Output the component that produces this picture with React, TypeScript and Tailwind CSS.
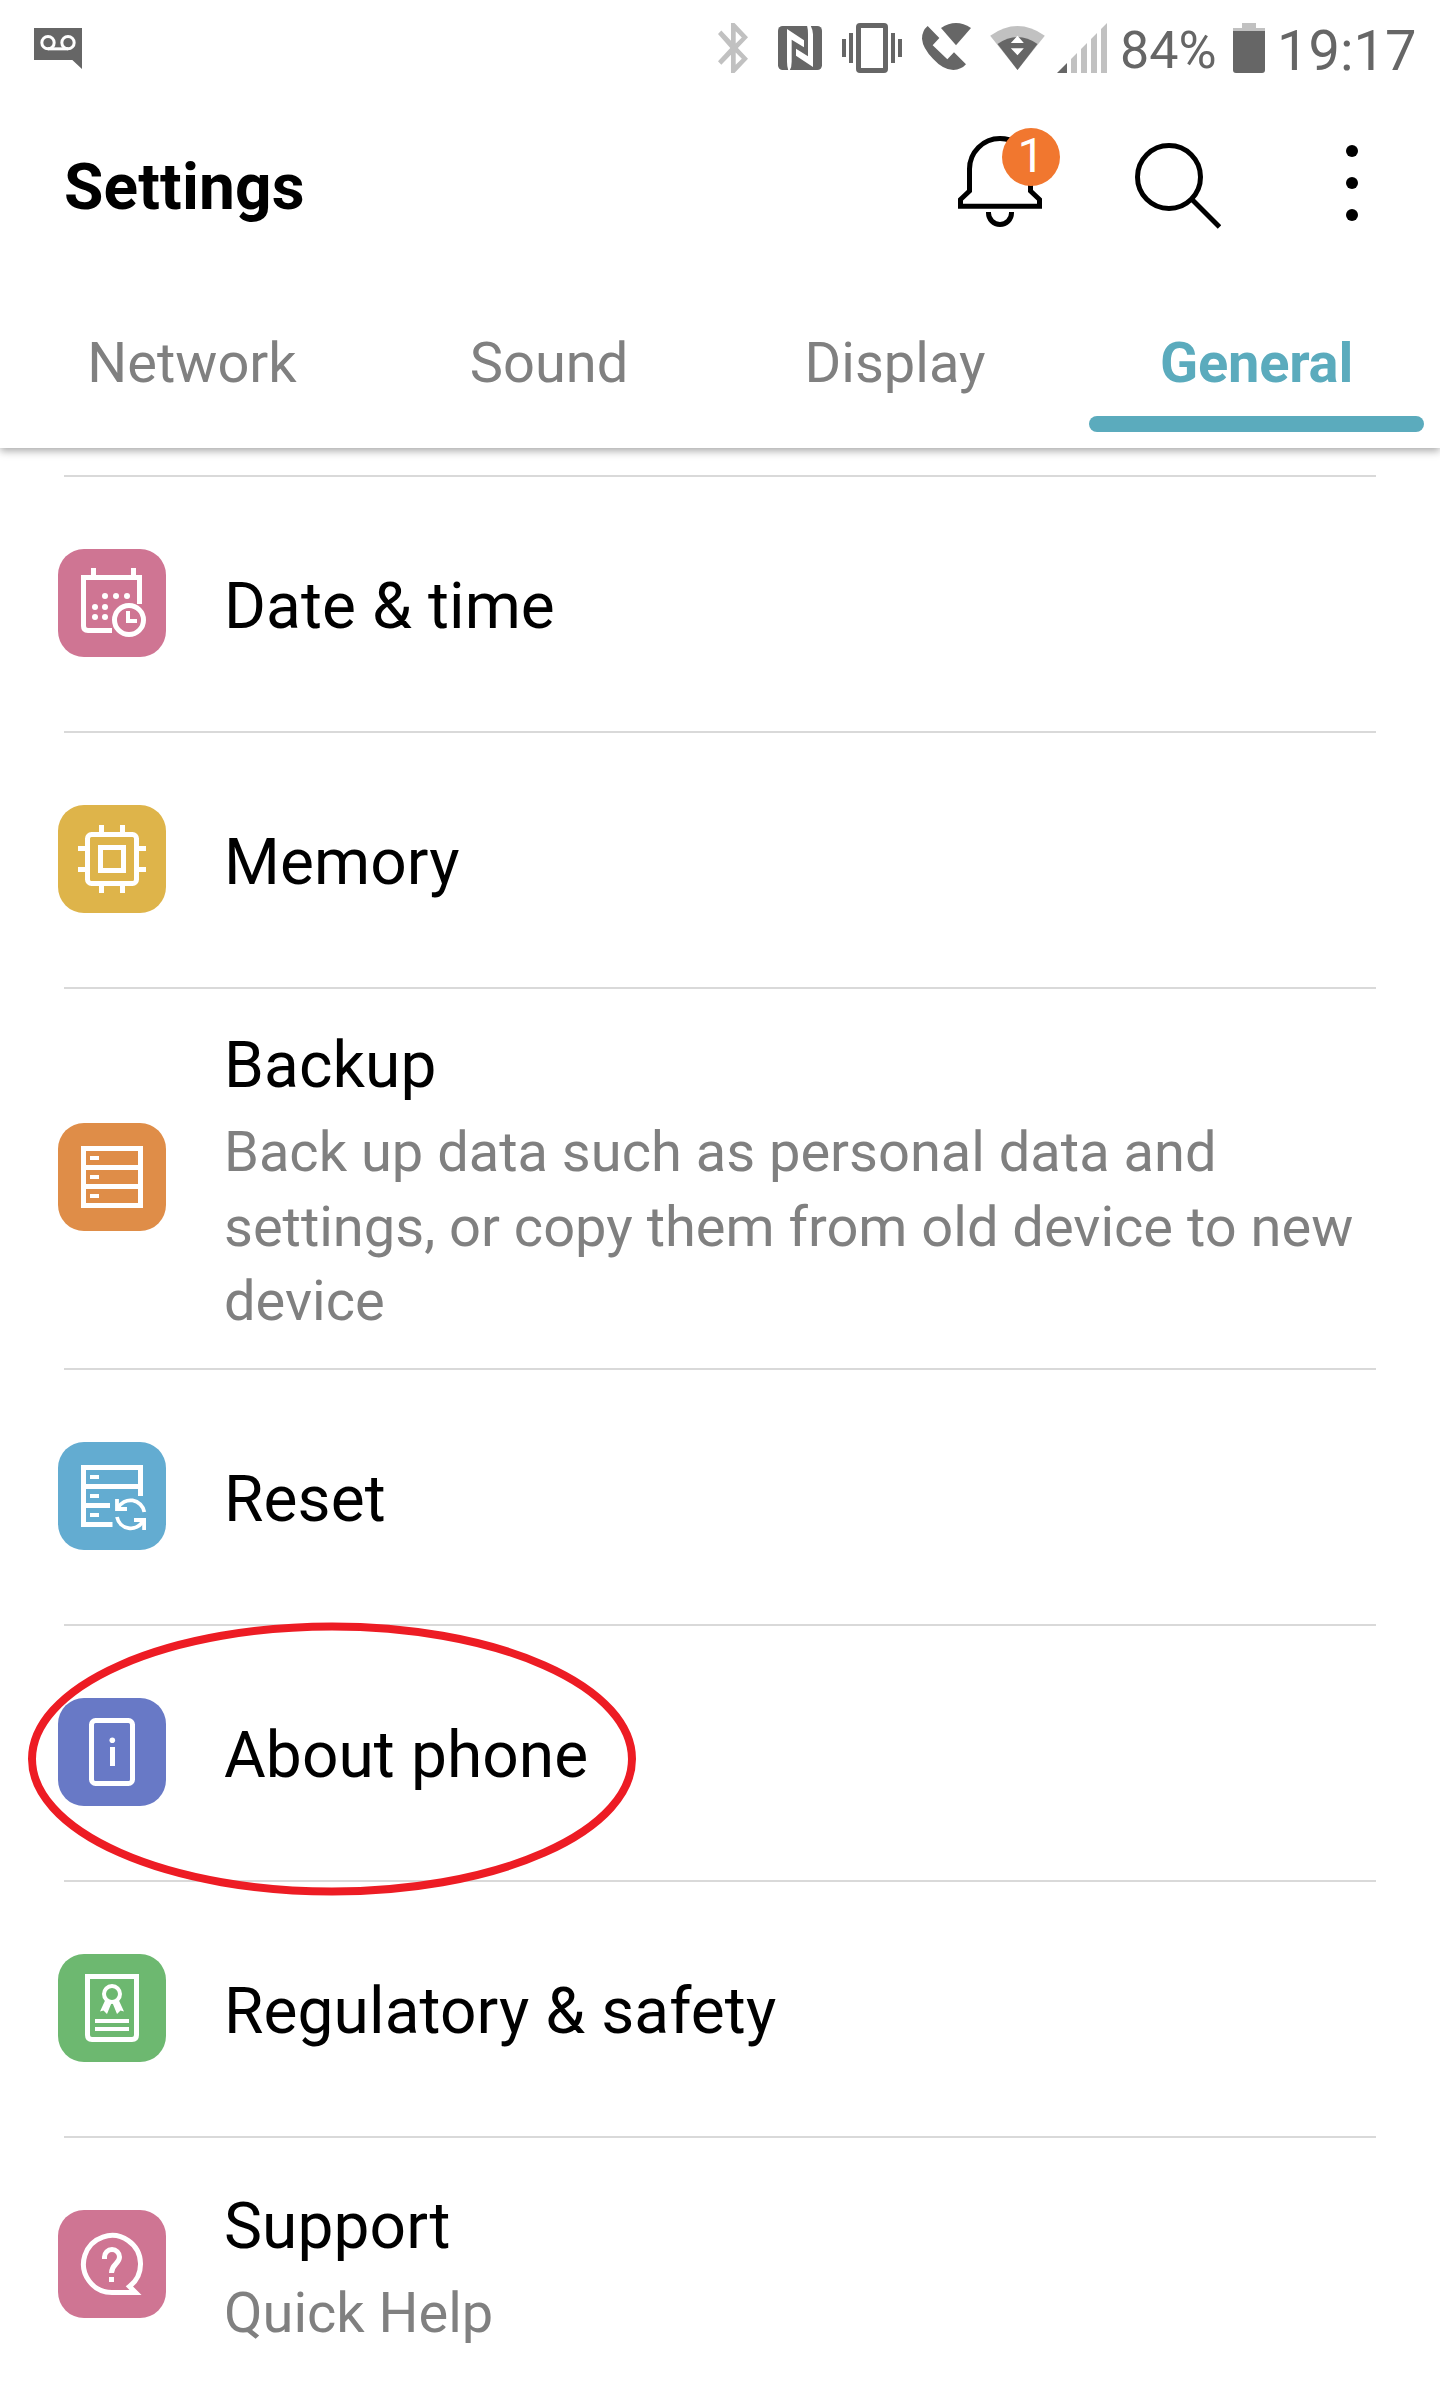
import type { ReactNode } from 'react';

/* ---------- status bar icons ---------- */

const VoicemailIcon = () => (
  <svg className="h-[41px] w-12" viewBox="102 81 144 123">
    <path d="M102 81H246V204L217 177H102Z" fill="#666666" />
    <g fill="none" stroke="#fff" strokeWidth="9">
      <circle cx="144" cy="125" r="18.500" />
      <circle cx="204" cy="125" r="18.500" />
      <path d="M144 143.500H204" />
    </g>
  </svg>
);

const BluetoothIcon = () => (
  <svg className="h-[50px] w-[30px]" viewBox="5 2 12.71 20" preserveAspectRatio="none">
    <path
      fill="#c1c1c1"
      d="M17.71 7.71L12 2h-1.500v7.1L6.41 5 5 6.41 10.2 12 5 17.29 6.41 18.700 10.500 14.700V22h1.500l5.71-5.71-4.3-4.29 4.3-4.29zM12.500 5.300l2.6 2.500L12.500 10.200V5.300zm2.6 11L12.500 18.700v-4.900l2.6 2.500z"
    />
  </svg>
);

const NfcIcon = () => (
  <svg className="h-11 w-11" viewBox="234 78 132 132">
    <rect x="234" y="78" width="132" height="132" rx="14" fill="#666666" />
    <path d="M261 87L312 121V142L275 119V185Q275 202 269 211H265Q261 200 261 185Z" fill="#fff" />
    <path d="M339 201L288 167V146L324 169V103Q324 86 321 77H332Q338 88 339 103Z" fill="#fff" />
  </svg>
);

const VibrateIcon = () => (
  <svg className="h-[50px] w-[60px]" viewBox="842 23 60 50" fill="#666666">
    <rect x="858.500" y="25.500" width="27" height="45" rx="1.500" fill="none" stroke="#666666" strokeWidth="5" />
    <path d="M842 39h4v18h-4zM849 33h4v30h-4zM891 33h4v30h-4zM898 39h4v18h-4z" />
  </svg>
);

const WifiCallIcon = () => (
  <svg className="h-[50px] w-[49px]" viewBox="666 69 147 150" fill="#666666">
    <path d="M683 78Q666 92 666 116Q668 144 699 176Q729 209 760 210Q784 209 798 193L762 157L742 178L698 136L718 114Z" />
    <path d="M768 136L723 84Q768 54 813 84Z" />
  </svg>
);

const WifiIcon = () => (
  <svg className="h-11 w-[55px]" viewBox="872 78 164 132">
    <path d="M954 210L872 107Q954 49 1036 107Z" fill="#c1c1c1" />
    <path d="M954 210L894 132Q954 90 1014 132Z" fill="#666666" />
    <path d="M934 129L954 107L973 129ZM934 145H973L954 166Z" fill="#fff" />
  </svg>
);

const SignalIcon = () => (
  <svg className="h-[50px] w-[50px]" viewBox="1057 23 50 50">
    <path d="M1057 73L1067 63V73Z" fill="#666666" />
    <path
      fill="#c1c1c1"
      d="M1071 73V59L1077 53V73ZM1081 73V49L1087 43V73ZM1091 73V39L1097 33V73ZM1101 73V29L1107 23V73Z"
    />
  </svg>
);

const BatteryIcon = () => (
  <svg className="h-[50px] w-8" viewBox="0 0 32 50">
    <path d="M9 0h14v5h9v3H0V5h9z" fill="#c1c1c1" />
    <path d="M0 8h32v39q0 3-3 3H3q-3 0-3-3z" fill="#666666" />
  </svg>
);

/* ---------- header icons ---------- */

const BellIcon = () => (
  <svg className="h-[91px] w-[84px]" viewBox="958 136 84 91" fill="none" stroke="#000" strokeWidth="5">
    <path d="M969.500 169a30.500 30.500 0 0 1 61 0V191L1039.500 199.500V206.300H960.500V199.500L969.500 191Z" />
    <path d="M988.500 212v1a11.500 11.500 0 0 0 23 0v-1" />
  </svg>
);

const SearchIcon = () => (
  <svg className="h-[86px] w-[86px]" viewBox="1135 143 86 86" fill="none" stroke="#000" strokeWidth="5">
    <circle cx="1169" cy="177" r="31.500" />
    <path d="M1192 199.500L1219.500 227" />
  </svg>
);

const MoreIcon = () => (
  <svg className="h-[76px] w-3" viewBox="0 0 12 76">
    <circle cx="6" cy="6" r="6" />
    <circle cx="6" cy="38" r="6" />
    <circle cx="6" cy="70" r="6" />
  </svg>
);

/* ---------- list icons, each on a 108px tile ---------- */

const Tile = ({ color, children }: { color: string; children: ReactNode }) => (
  <div className={`h-[108px] w-[108px] shrink-0 overflow-hidden rounded-[26px] ${color}`}>
    <svg className="size-full" viewBox="0 0 108 108" fill="none" stroke="#fff" strokeWidth="5">
      {children}
    </svg>
  </div>
);

const CalendarGlyph = () => (
  <>
    <path d="M81.500 55V28.500H25.500V77q0 4.500 4.500 4.500H54" />
    <path d="M35.500 19v8M75.500 19v8" />
    <g fill="#fff" stroke="none">
      <circle cx="47" cy="47" r="3" />
      <circle cx="58" cy="47" r="3" />
      <circle cx="69" cy="47" r="3" />
      <circle cx="37" cy="58" r="3" />
      <circle cx="47" cy="58" r="3" />
      <circle cx="37" cy="68" r="3" />
      <circle cx="47" cy="68" r="3" />
    </g>
    <circle cx="71" cy="71" r="14.500" />
    <path d="M70 62v10h9" strokeWidth="4" />
  </>
);

const ChipGlyph = () => (
  <>
    <rect x="29.500" y="29.500" width="49" height="49" rx="4" />
    <rect x="42.500" y="42.500" width="23" height="23" />
    <path d="M43.500 20v8M64.500 20v8M43.500 80v8M64.500 80v8M20 43.500h8M20 64.500h8M80 43.500h8M80 64.500h8" />
  </>
);

const ServerGlyph = () => (
  <>
    <rect x="25.500" y="25.500" width="57" height="57" />
    <path d="M25 44.500h58M25 63.500h58" />
    <path d="M32 35h9M32 54h9M32 73h9" strokeWidth="4" />
  </>
);

const ServerRefreshGlyph = () => (
  <>
    <path d="M82.500 54V25.500H25.500V82.500H54.500" />
    <path d="M25 44.500h58M25 63.500h27" />
    <path d="M32 35h9M32 54h9M32 73h9" strokeWidth="4" />
    <g strokeWidth="3.800">
      <path d="M60 66A14 14 0 0 1 86.300 70" />
      <path d="M59 57v10h10" />
      <path d="M59 75A14 14 0 0 0 85 79" />
      <path d="M86.100 88V78H76" />
    </g>
  </>
);

const PhoneInfoGlyph = () => (
  <>
    <rect x="33.500" y="22.500" width="41" height="63" rx="4" />
    <circle cx="54.300" cy="42.300" r="2.800" fill="#fff" stroke="none" />
    <path d="M54.500 49v19" />
  </>
);

const CertificateGlyph = () => (
  <>
    <path d="M29.500 22.500H78.500V81q0 4.500-4.500 4.500H34q-4.500 0-4.500-4.500Z" />
    <circle cx="54" cy="40" r="8" strokeWidth="4" />
    <path
      fill="#fff"
      stroke="none"
      d="M47.300 46L42 57.500L45.500 56.500L49 60L53.500 49ZM60.700 46L66 57.500L62.500 56.500L59 60L54.500 49Z"
    />
    <path d="M37 67h34M37 75h34" strokeWidth="4" />
  </>
);

const HelpGlyph = () => (
  <>
    <path d="M54 82.500A28.500 28.500 0 1 1 71.500 76.500L77.500 82.500Z" />
    <path d="M46.500 49V47a7.500 7.500 0 0 1 15 0C61.500 54 53.500 54 53.500 63" />
    <path d="M53.500 67v5" />
  </>
);

/* ---------- list ---------- */

type Item = { title: string; detail?: string; color: string; glyph: ReactNode; height: string };

const items: Item[] = [
  { title: 'Date & time', color: 'bg-[#cf7593]', glyph: <CalendarGlyph />, height: 'h-64' },
  { title: 'Memory', color: 'bg-[#deb44a]', glyph: <ChipGlyph />, height: 'h-64' },
  {
    title: 'Backup',
    detail: 'Back up data such as personal data and settings, or copy them from old device to new device',
    color: 'bg-[#df8d48]',
    glyph: <ServerGlyph />,
    height: 'h-[381px]',
  },
  { title: 'Reset', color: 'bg-[#63acd1]', glyph: <ServerRefreshGlyph />, height: 'h-64' },
  { title: 'About phone', color: 'bg-[#6879c6]', glyph: <PhoneInfoGlyph />, height: 'h-64' },
  { title: 'Regulatory & safety', color: 'bg-[#6db870]', glyph: <CertificateGlyph />, height: 'h-64' },
  { title: 'Support', detail: 'Quick Help', color: 'bg-[#cf7593]', glyph: <HelpGlyph />, height: 'h-64' },
];

const Row = ({ item }: { item: Item }) => (
  <li className={`relative flex items-center border-t-2 border-[#d9d9d9] ${item.height}`}>
    <div className="-ml-1.5 mb-[3px]">
      <Tile color={item.color}>{item.glyph}</Tile>
    </div>
    <div className={`ml-[58px] flex-1 ${item.detail ? 'pt-2.5' : 'pt-1'}`}>
      <h2 className="text-[64px] leading-[75px] tracking-[0.1px] text-black">{item.title}</h2>
      {item.detail && <p className="mt-3 text-[56px] leading-[74.5px] text-[#808080]">{item.detail}</p>}
    </div>
    {item.title === 'About phone' && (
      <svg
        className="pointer-events-none absolute -top-[4px] -left-9 z-10 h-[274px] w-[608px]"
        viewBox="0 0 608 274"
        fill="none"
      >
        <ellipse cx="304" cy="137" rx="300" ry="132.500" stroke="#ed1c24" strokeWidth="8" />
      </svg>
    )}
  </li>
);

const tabs = ['Network', 'Sound', 'Display', 'General'];

export default function App() {
  return (
    <div className="flex h-[2392px] w-[1440px] flex-col overflow-hidden bg-white font-['Roboto',sans-serif]">
      <header className="relative z-10 flex h-[448px] shrink-0 flex-col bg-white shadow-[0_3px_8px_rgba(0,0,0,0.34)]">
        <div className="flex h-24 items-center pr-[26px] pl-[34px] text-[#666666]">
          <VoicemailIcon />
          <div className="ml-auto flex items-center">
            <BluetoothIcon />
            <div className="ml-[30px]"><NfcIcon /></div>
            <div className="ml-5"><VibrateIcon /></div>
            <div className="ml-5"><WifiCallIcon /></div>
            <div className="ml-[19px]"><WifiIcon /></div>
            <div className="ml-3"><SignalIcon /></div>
            <span className="w-[126px] pt-1.5 pl-[13px] text-[52px] leading-[48px] whitespace-nowrap">84%</span>
            <BatteryIcon />
            <span className="w-[149px] pt-1.5 pl-[12px] text-[56px] leading-[48px] whitespace-nowrap">19:17</span>
          </div>
        </div>

        <div className="flex h-[180px] items-center pr-[82px] pl-16">
          <h1 className="pt-0.5 text-[64px] leading-[75px] font-bold tracking-[0.15px] text-black">Settings</h1>
          <div className="relative -mt-[9px] ml-auto">
            <BellIcon />
            <span className="absolute -top-2 left-11 flex size-[58px] items-center justify-center rounded-full bg-[#f1772f] pb-0.5 text-[48px] leading-none text-white">
              1
            </span>
          </div>
          <div className="ml-[93px]"><SearchIcon /></div>
          <div className="mb-1.5 ml-[125px]"><MoreIcon /></div>
        </div>

        <nav className="grid flex-1 grid-cols-[384px_330px_362px_361px] text-[56px] leading-[66px]">
          {tabs.map((tab) =>
            tab === 'General' ? (
              <div
                key={tab}
                className="flex flex-col items-center pt-[54px] font-bold tracking-[-0.2px] text-[#5babbd]"
              >
                {tab}
                <span className="mt-5 h-4 w-[335px] rounded-full bg-[#5babbd]" />
              </div>
            ) : (
              <div key={tab} className="pt-[54px] text-center text-[#808080]">
                {tab}
              </div>
            ),
          )}
        </nav>
      </header>

      <ul className="mx-16 mt-[27px]">
        {items.map((item) => (
          <Row key={item.title} item={item} />
        ))}
      </ul>
    </div>
  );
}
